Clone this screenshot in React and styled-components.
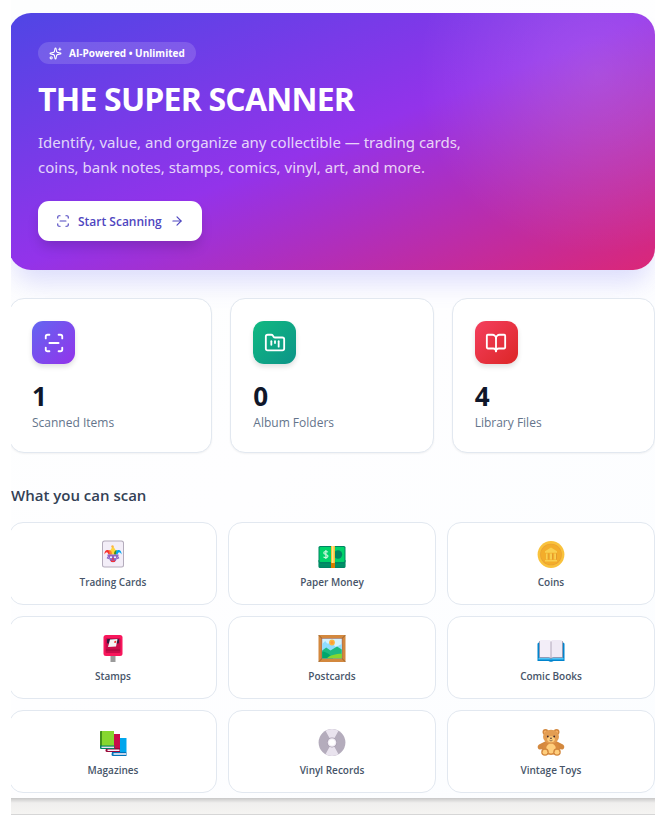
import React from 'react';
import styled, { createGlobalStyle } from 'styled-components';
import { ArrowRight, BookOpen, FolderKanban, ScanLine, Sparkles } from 'lucide-react';

const stats = [
  { value: 1, label: 'Scanned Items', icon: ScanLine, from: '#6366f1', to: '#9333ea' },
  { value: 0, label: 'Album Folders', icon: FolderKanban, from: '#10b981', to: '#0d9488' },
  { value: 4, label: 'Library Files', icon: BookOpen, from: '#f43f5e', to: '#dc2626' },
];

function JokerCard() {
  return (
    <Emoji viewBox="0 0 28 28" aria-hidden="true">
      <rect x="3" y="0.5" width="22" height="27" rx="2.5" fill="#b4acbc" />
      <rect x="4" y="1.5" width="20" height="25" rx="1.6" fill="#f3eef8" />
      <path d="M9.500 14.500C8.500 11.500 7 11.500 5.500 14.500 5 10.500 8.500 8.500 11 11.500l1 3z" fill="#f8312f" />
      <path d="M18.500 14.500c1-3 2.500-3 4 0 .5-4-3-6-5.500-3l-1 3z" fill="#00a6ed" />
      <path d="M11 14.500c-1-4 1.500-5 2.500-8.500 2.500 2 4 5 3.500 8.500z" fill="#fcd53f" />
      <path d="M11 14.500c-.5-3-.5-4-2-4.500 3-.5 4 1.500 4 4.500z" fill="#ff822d" />
      <path d="M15 14.500c0-3 1-4.500 3-4.500-1 1.500-1 2.500-1 4.500z" fill="#44911b" />
      <circle cx="13.500" cy="6.500" r="1.200" fill="#fcb53f" />
      <path d="M8.500 14.500h11v2l-1.500.8c0 3-2 5-4 5s-4-2-4-5l-1.500-.8z" fill="#8d65c5" />
      <path d="M8 17.500l2 1M20 17.500l-2 1" stroke="#8d65c5" strokeWidth="1.500" />
      <circle cx="12" cy="17.200" r="1" fill="#fff" />
      <circle cx="16" cy="17.200" r="1" fill="#fff" />
      <path d="M11.500 20c1.500 1 3.500 1 5 0l-.8 2h-3.400z" fill="#f8312f" />
      <circle cx="14" cy="18.800" r=".9" fill="#f8312f" />
    </Emoji>
  );
}

function Banknotes() {
  return (
    <Emoji viewBox="0 0 28 28" aria-hidden="true">
      <path d="M.5 20h27v6.500a1.500 1.500 0 0 1-1.500 1.500H2a1.500 1.500 0 0 1-1.500-1.500z" fill="#008463" />
      <path d="M.5 24.200h27M.5 26h27" stroke="#00a66c" strokeWidth=".6" />
      <rect x=".5" y="6" width="27" height="17" rx="1.500" fill="#008463" />
      <rect x="1.500" y="7" width="25" height="15" rx="1" fill="#00d26a" />
      <circle cx="20" cy="14.500" r="4.200" fill="#008463" />
      <path d="M9.800 12.200c-.5-1-4-1.100-4 .7 0 2 4.200 1.200 4.200 3.200 0 1.900-3.700 1.900-4.400.6M7.900 10v9" fill="none" stroke="#c9f7dd" strokeWidth="1.200" />
      <path d="M13 6h4v22h-4z" fill="#f9c23c" />
      <path d="M14 6h1.500v17H14z" fill="#ffe48c" />
      <path d="M13 23h4v5h-4z" fill="#d67d00" />
    </Emoji>
  );
}

function Coin() {
  return (
    <Emoji viewBox="0 0 28 28" aria-hidden="true">
      <circle cx="14" cy="14.500" r="13.400" fill="#f9c23c" />
      <circle cx="14" cy="14.500" r="10.800" fill="#e8a035" />
      <circle cx="14" cy="14.500" r="10.200" fill="#f3ad2b" />
      <path d="M14 7.500l6 3.800v1.500H8v-1.500zM9 13.500h1.800v6H9zM13 13.500h2v6h-2zM17.200 13.500H19v6h-1.800zM8 20h12v1.500H8z" fill="#f9cf4f" />
      <path d="M11.200 13.500v6M15.500 13.500v6M19.500 13.500v6" stroke="#d98d2e" strokeWidth=".6" />
    </Emoji>
  );
}

function Postbox() {
  return (
    <Emoji viewBox="0 0 28 28" aria-hidden="true">
      <path d="M11.500 20h5v8h-5z" fill="#9b9b9b" />
      <rect x="4.500" y="1" width="19" height="21" rx="2.500" fill="#f8175c" />
      <rect x="6.500" y="4" width="15" height="15" rx="1.500" fill="#ca0b4a" />
      <rect x="8" y="5" width="12" height="4.500" rx="1" fill="#321b41" />
      <path d="M11 5.500l7.500-.5-1.500 7.500-8 .5z" fill="#f4f4f4" />
      <path d="M15.500 7l1.800-.2-.3 2-1.800.2z" fill="#f8312f" />
      <path d="M7 16h14" stroke="#990838" strokeWidth=".8" />
    </Emoji>
  );
}

function FramedPicture() {
  return (
    <Emoji viewBox="0 0 28 28" aria-hidden="true">
      <rect x=".5" y="1" width="27" height="27" rx="1" fill="#d3883e" />
      <path d="M.5 1l4 4M27.500 1l-4 4M.5 28l4-4M27.500 28l-4-4" stroke="#8b5a2b" strokeWidth=".8" />
      <rect x="3.500" y="4" width="21" height="21" fill="#a56953" />
      <rect x="4.200" y="4.700" width="19.600" height="19.600" fill="#d3f2ff" />
      <path d="M4.200 10l3-3 2 2.500H14L18 13l5.800-3v8H4.200z" fill="#8edcff" />
      <circle cx="14" cy="8.500" r="2.900" fill="#fcb53f" />
      <circle cx="14" cy="8.500" r="1.500" fill="#ff9b35" />
      <path d="M4.200 16.500l4-3 4.300 3 6.500-4 4.800 3v8.800H4.200z" fill="#1eb980" />
      <path d="M4.200 17.500c6 .5 8 4 11 6.800h-11z" fill="#00a66c" />
      <path d="M9 24.300c2.500-3 8.500-4.500 14.800-4.500v4.500z" fill="#86d72f" />
    </Emoji>
  );
}

function OpenBook() {
  return (
    <Emoji viewBox="0 0 28 28" aria-hidden="true">
      <path d="M.5 10a1.500 1.500 0 0 1 1.500-1.500h24a1.500 1.500 0 0 1 1.500 1.500v17h-11c-.8 1-4.200 1-5 0H.5z" fill="#0084ce" />
      <path d="M1.500 24h11l1.500 1 1.500-1h11v1.500h-25z" fill="#50c5f5" />
      <path d="M2.500 7.500c0-1 1-1.500 2-1.500h7.500c1 0 2 .5 2 1.500V24.500c-1-1-2-1-3-1H2.500z" fill="#f3eef8" />
      <path d="M25.500 7.500c0-1-1-1.500-2-1.500H16c-1 0-2 .5-2 1.500V24.500c1-1 2-1 3-1h8.500z" fill="#f0eaf5" />
      <path d="M14 7.500v17M2.500 7v16.500h9c1.500 0 2.500 1 2.500 1s1-1 2.500-1h9V7" fill="none" stroke="#998ea4" strokeWidth=".7" />
    </Emoji>
  );
}

function Books() {
  return (
    <Emoji viewBox="0 0 28 28" aria-hidden="true">
      <path d="M13 10h14.500v14H13z" fill="#00a6ed" />
      <path d="M13 24h14.500v4H14a1.500 1.500 0 0 1-1.500-1.500z" fill="#0074ba" />
      <path d="M14.500 25.200h12.500v1.600H14.500z" fill="#f3eef8" />
      <path d="M7 6h14v14H7z" fill="#ca0b4a" />
      <path d="M7 20h14v4H8a1.500 1.500 0 0 1-1.500-1.500z" fill="#990838" />
      <path d="M8.500 21.500h12v1.500h-12z" fill="#f3eef8" />
      <path d="M1 4a1 1 0 0 1 1-1h13v15H1z" fill="#86d72f" />
      <path d="M1 4a1 1 0 0 1 1-1h1v15H1z" fill="#44911b" />
      <path d="M1 17.500h14.500V21H2a1 1 0 0 1-1-1z" fill="#008463" />
      <path d="M2.500 18.600h12.500v1.400H2.500z" fill="#e6e1ec" />
    </Emoji>
  );
}

function Disc() {
  return (
    <Emoji viewBox="0 0 28 28" aria-hidden="true">
      <circle cx="14" cy="14.500" r="13.400" fill="#b4acbc" />
      <path d="M14 14.500L7.500 2.800a13.400 13.400 0 0 1 13 0zM14 14.500l6.500 11.700a13.400 13.400 0 0 1-13 0z" fill="#e9e3ee" />
      <circle cx="14" cy="14.500" r="5" fill="#a79daf" />
      <circle cx="14" cy="14.500" r="4.300" fill="#f1edf5" />
      <circle cx="14" cy="14.500" r="3" fill="#fff" />
    </Emoji>
  );
}

function TeddyBear() {
  return (
    <Emoji viewBox="0 0 28 28" aria-hidden="true">
      <circle cx="8.500" cy="4" r="3" fill="#d3883e" />
      <circle cx="19.500" cy="4" r="3" fill="#d3883e" />
      <circle cx="8.500" cy="4" r="1.500" fill="#ffb56b" />
      <circle cx="19.500" cy="4" r="1.500" fill="#ffb56b" />
      <path d="M9 13L2 16.500c-2 1.500-1.500 4.500.5 5L9 21zM19 13l7 3.500c2 1.500 1.500 4.500-.5 5L19 21z" fill="#d3883e" />
      <ellipse cx="14" cy="19.500" rx="8" ry="7.500" fill="#d98b3f" />
      <ellipse cx="14" cy="20.500" rx="4.800" ry="5" fill="#ffce7c" />
      <ellipse cx="14" cy="8.800" rx="8" ry="7" fill="#e39d52" />
      <ellipse cx="14" cy="11.200" rx="3.800" ry="3" fill="#ffce7c" />
      <circle cx="10.800" cy="8.500" r=".9" fill="#402a32" />
      <circle cx="17.200" cy="8.500" r=".9" fill="#402a32" />
      <path d="M12.700 9.700h2.600L14 11.200z" fill="#402a32" />
      <path d="M12.500 12.200c.8.800 2.200.8 3 0" fill="none" stroke="#402a32" strokeWidth=".6" />
      <circle cx="8" cy="24" r="3.800" fill="#d3883e" />
      <circle cx="20" cy="24" r="3.800" fill="#d3883e" />
      <circle cx="8" cy="24.200" r="2.400" fill="#ffce7c" />
      <circle cx="20" cy="24.200" r="2.400" fill="#ffce7c" />
    </Emoji>
  );
}

const categories = [
  { label: 'Trading Cards', art: JokerCard },
  { label: 'Paper Money', art: Banknotes },
  { label: 'Coins', art: Coin },
  { label: 'Stamps', art: Postbox },
  { label: 'Postcards', art: FramedPicture },
  { label: 'Comic Books', art: OpenBook },
  { label: 'Magazines', art: Books },
  { label: 'Vinyl Records', art: Disc },
  { label: 'Vintage Toys', art: TeddyBear },
];

function App() {
  return (
    <>
      <GlobalStyle />
      <Panel>
        <Content>
          <Hero>
            <Badge>
              <Sparkles size={13} />
              AI-Powered • Unlimited
            </Badge>
            <Title>THE SUPER SCANNER</Title>
            <Intro>
              Identify, value, and organize any collectible — trading cards,
              coins, bank notes, stamps, comics, vinyl, art, and more.
            </Intro>
            <StartButton type="button">
              <ScanLine size={14} />
              Start Scanning
              <ArrowRight size={14} />
            </StartButton>
          </Hero>
          <StatGrid>
            {stats.map(({ value, label, icon: Icon, from, to }) => (
              <StatCard key={label}>
                <StatIcon $from={from} $to={to}>
                  <Icon size={22} />
                </StatIcon>
                <StatValue>{value}</StatValue>
                <StatLabel>{label}</StatLabel>
              </StatCard>
            ))}
          </StatGrid>
          <SectionTitle>What you can scan</SectionTitle>
          <CategoryGrid>
            {categories.map(({ label, art: Art }) => (
              <Category key={label}>
                <Art />
                <CategoryLabel>{label}</CategoryLabel>
              </Category>
            ))}
          </CategoryGrid>
        </Content>
        <BottomBar />
      </Panel>
    </>
  );
}

const GlobalStyle = createGlobalStyle`
  * {
    box-sizing: border-box;
  }

  body {
    margin: 0;
    background: #fff;
    font-family: 'Open Sans', 'Noto Sans', sans-serif;
  }
`;

const Panel = styled.main`
  margin: 0 12px 0 11px;
  overflow: hidden;
  background: linear-gradient(135deg, #fdfefe, #fefeff 50%, #fbfdff);
`;

const Content = styled.div`
  margin-left: -2px;
  padding: 13px 0 5px;
`;

const Hero = styled.section`
  display: flex;
  flex-direction: column;
  align-items: flex-start;
  padding: 29px;
  border-radius: 22px;
  color: #fff;
  background:
    radial-gradient(circle at 91% 24%, rgba(255, 255, 255, 0.14), rgba(255, 255, 255, 0.1) 60px, transparent 180px),
    linear-gradient(to bottom right, #4f46e5, #9333ea 50%, #db2777);
  box-shadow: 0 18px 26px -6px rgba(99, 102, 241, 0.22);
`;

const Badge = styled.span`
  display: flex;
  align-items: center;
  gap: 7px;
  height: 22px;
  padding: 0 11px;
  border-radius: 11px;
  background: rgba(255, 255, 255, 0.15);
  font-size: 10px;
  font-weight: 700;
`;

const Title = styled.h1`
  margin: 15px 0 11px;
  font-size: 32px;
  font-weight: 700;
  line-height: 40px;
  letter-spacing: -0.025em;
`;

const Intro = styled.p`
  max-width: 460px;
  margin: 0 0 21px;
  font-family: 'Noto Sans', sans-serif;
  font-size: 15px;
  line-height: 25px;
  color: rgba(255, 255, 255, 0.8);
`;

const StartButton = styled.button`
  display: flex;
  align-items: center;
  gap: 8px;
  height: 40px;
  padding: 0 18px;
  border: 0;
  border-radius: 11px;
  background: #fff;
  color: #4f46c0;
  font-family: inherit;
  font-size: 12px;
  font-weight: 600;
  box-shadow: 0 8px 14px -3px rgba(0, 0, 0, 0.18);
`;

const StatGrid = styled.section`
  display: grid;
  grid-template-columns: repeat(3, 1fr);
  gap: 18px;
  margin-top: 28px;
`;

const StatCard = styled.div`
  padding: 22px 22px 20px;
  border: 1px solid #e2e8f0;
  border-radius: 15px;
  background: #fff;
  box-shadow: 0 1px 2px rgba(0, 0, 0, 0.05);
`;

const StatIcon = styled.div`
  display: grid;
  place-items: center;
  width: 43px;
  height: 43px;
  margin-bottom: 15px;
  border-radius: 11px;
  color: #fff;
  background: linear-gradient(to bottom right, ${({ $from }) => $from}, ${({ $to }) => $to});
  box-shadow: 0 3px 5px rgba(0, 0, 0, 0.12);
`;

const StatValue = styled.div`
  font-size: 26px;
  font-weight: 700;
  line-height: 35px;
  color: #0f172a;
`;

const StatLabel = styled.div`
  font-size: 12px;
  line-height: 18px;
  color: #64748b;
`;

const SectionTitle = styled.h2`
  margin: 29px 0 14px;
  padding-left: 2px;
  font-size: 15px;
  font-weight: 600;
  line-height: 26px;
  color: #334155;
`;

const CategoryGrid = styled.section`
  display: grid;
  grid-template-columns: repeat(3, 1fr);
  gap: 11px;
`;

const Category = styled.div`
  display: flex;
  flex-direction: column;
  align-items: center;
  gap: 6px;
  padding: 17px 8px 13px;
  border: 1px solid #e2e8f0;
  border-radius: 14px;
  background: #fff;
`;

const CategoryLabel = styled.span`
  font-size: 10px;
  font-weight: 600;
  line-height: 17px;
  color: #475569;
`;

const Emoji = styled.svg`
  display: block;
  width: 28px;
  height: 28px;
`;

const BottomBar = styled.footer`
  height: 17px;
  border-bottom: 1px solid #d6d6d6;
  background: linear-gradient(#c8c8c8, #f0efee 5px, #f5f4f2);
`;

export default App;
